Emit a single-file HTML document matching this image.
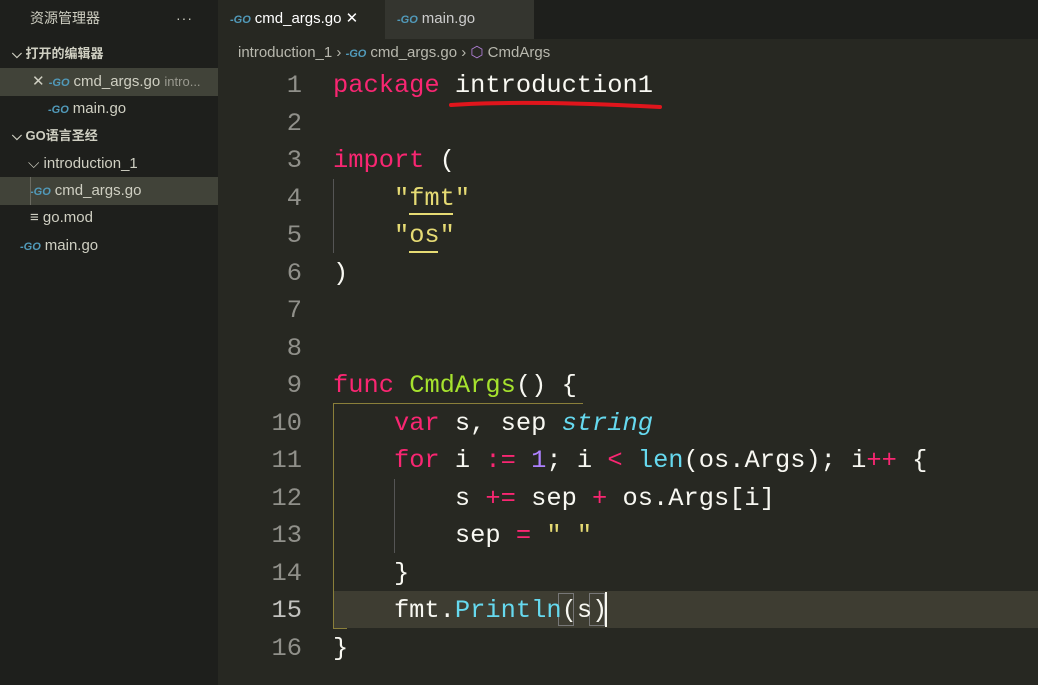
<!DOCTYPE html>
<html><head><meta charset="utf-8"><style>
*{margin:0;padding:0;box-sizing:border-box}
body{width:1038px;height:685px;background:#272822;overflow:hidden;position:relative;font-family:"Liberation Sans","Noto Sans CJK SC",sans-serif;color:#ccc}
.sb{position:absolute;left:0;top:0;width:218px;height:685px;background:#1e1f1c}
.sb div{position:absolute;left:0;width:218px;height:28px;line-height:28px;font-size:15px;color:#cfcfc2;white-space:nowrap}
.go{color:#519aba;font-weight:bold;font-size:11px;font-style:italic;margin-right:4px}
.tabs{position:absolute;left:218px;top:0;right:0;height:39px;background:#1e1f1c}
.tab{position:absolute;top:0;height:39px;line-height:38px;font-size:15px;padding-left:12px}
.code{position:absolute;left:218px;top:67px;font-family:"Liberation Mono",monospace;font-size:25.4px}
.l{position:absolute;height:37.5px;line-height:37.5px;white-space:pre;color:#f8f8f2;left:115px}
.n{position:absolute;width:84px;text-align:right;left:0;height:37.5px;line-height:37.5px;color:#90908a}
.k{color:#f92672}.f{color:#a6e22e}.s{color:#e6db74}.b{color:#66d9ef}.p{color:#ae81ff}
</style></head><body>
<div class="sb">
<div style="top:4px;padding-left:30px;font-size:14px">资源管理器<span style="position:absolute;left:176px;letter-spacing:1px">···</span></div>
<div style="top:40px;padding-left:12px;font-size:13px;font-weight:bold">⌵ 打开的编辑器</div>
<div style="top:68px;background:#414339;padding-left:32px">✕ <span class="go">-GO</span>cmd_args.go <span style="color:#9a9a90;font-size:13px">intro...</span></div>
<div style="top:95px;padding-left:48px"><span class="go">-GO</span>main.go</div>
<div style="top:122px;padding-left:12px;font-size:13px;font-weight:bold">⌵ GO语言圣经</div>
<div style="top:150px;padding-left:28px">⌵ introduction_1</div>
<div style="top:177px;background:#414339;padding-left:30px;border-left:0"><span class="go">-GO</span>cmd_args.go</div>
<div style="top:204px;padding-left:30px">≡ go.mod</div>
<div style="top:232px;padding-left:20px"><span class="go">-GO</span>main.go</div>
</div>
<div style="position:absolute;left:30px;top:177px;width:1px;height:28px;background:#6a6a60"></div>
<div class="tabs">
<div class="tab" style="left:0;width:167px;background:#272822;color:#fff"><span class="go">-GO</span>cmd_args.go ✕</div>
<div class="tab" style="left:167px;width:149px;background:#34352f;color:#ccc"><span class="go">-GO</span>main.go</div>
</div>
<div style="position:absolute;left:238px;top:43px;font-size:15px;color:#b8b8ae;white-space:nowrap">introduction_1 › <span class="go">-GO</span>cmd_args.go › <span style="color:#b180d7">⬡</span> CmdArgs</div>
<div style="position:absolute;left:333px;top:591px;width:705px;height:37px;background:#3e3d32"></div>
<div style="position:absolute;left:333px;top:403px;width:250px;height:226px;border-left:1px solid #8a7f3a;border-top:1px solid #8a7f3a"></div>
<div style="position:absolute;left:333px;top:628px;width:14px;height:1px;background:#8a7f3a"></div>
<div style="position:absolute;left:333px;top:179px;width:1px;height:74px;background:#555"></div>
<div style="position:absolute;left:394px;top:479px;width:1px;height:74px;background:#555"></div>
<div style="position:absolute;left:409px;top:213px;width:44px;height:2px;background:#e6db74"></div>
<div style="position:absolute;left:409px;top:251px;width:29px;height:2px;background:#e6db74"></div>
<div style="position:absolute;left:558px;top:593px;width:16px;height:33px;border:1px solid #777"></div>
<div style="position:absolute;left:589px;top:593px;width:16px;height:33px;border:1px solid #777"></div>
<div style="position:absolute;left:605px;top:592px;width:2px;height:35px;background:#f8f8f0"></div>
<svg style="position:absolute;left:445px;top:95px" width="225" height="20"><path d="M6 10 Q80 5 215 12" stroke="#e0151c" stroke-width="4" fill="none" stroke-linecap="round"/></svg>
<div class="code">
<div class="n" style="top:0">1</div><div class="l" style="top:0"><span class="k">package</span> introduction1</div>
<div class="n" style="top:37.5px">2</div>
<div class="n" style="top:75px">3</div><div class="l" style="top:75px"><span class="k">import</span> (</div>
<div class="n" style="top:112.5px">4</div><div class="l" style="top:112.5px">    <span class="s">"fmt"</span></div>
<div class="n" style="top:150px">5</div><div class="l" style="top:150px">    <span class="s">"os"</span></div>
<div class="n" style="top:187.5px">6</div><div class="l" style="top:187.5px">)</div>
<div class="n" style="top:225px">7</div>
<div class="n" style="top:262.5px">8</div>
<div class="n" style="top:300px">9</div><div class="l" style="top:300px"><span class="k">func</span> <span class="f">CmdArgs</span>() {</div>
<div class="n" style="top:337.5px">10</div><div class="l" style="top:337.5px">    <span class="k">var</span> s, sep <i class="b">string</i></div>
<div class="n" style="top:375px">11</div><div class="l" style="top:375px">    <span class="k">for</span> i <span class="k">:=</span> <span class="p">1</span>; i <span class="k">&lt;</span> <span class="b">len</span>(os.Args); i<span class="k">++</span> {</div>
<div class="n" style="top:412.5px">12</div><div class="l" style="top:412.5px">        s <span class="k">+=</span> sep <span class="k">+</span> os.Args[i]</div>
<div class="n" style="top:450px">13</div><div class="l" style="top:450px">        sep <span class="k">=</span> <span class="s">" "</span></div>
<div class="n" style="top:487.5px">14</div><div class="l" style="top:487.5px">    }</div>
<div class="n" style="top:525px;color:#c2c2bf">15</div><div class="l" style="top:525px">    fmt.<span class="b">Println</span>(s)</div>
<div class="n" style="top:562.5px">16</div><div class="l" style="top:562.5px">}</div>
</div>
</body></html>
